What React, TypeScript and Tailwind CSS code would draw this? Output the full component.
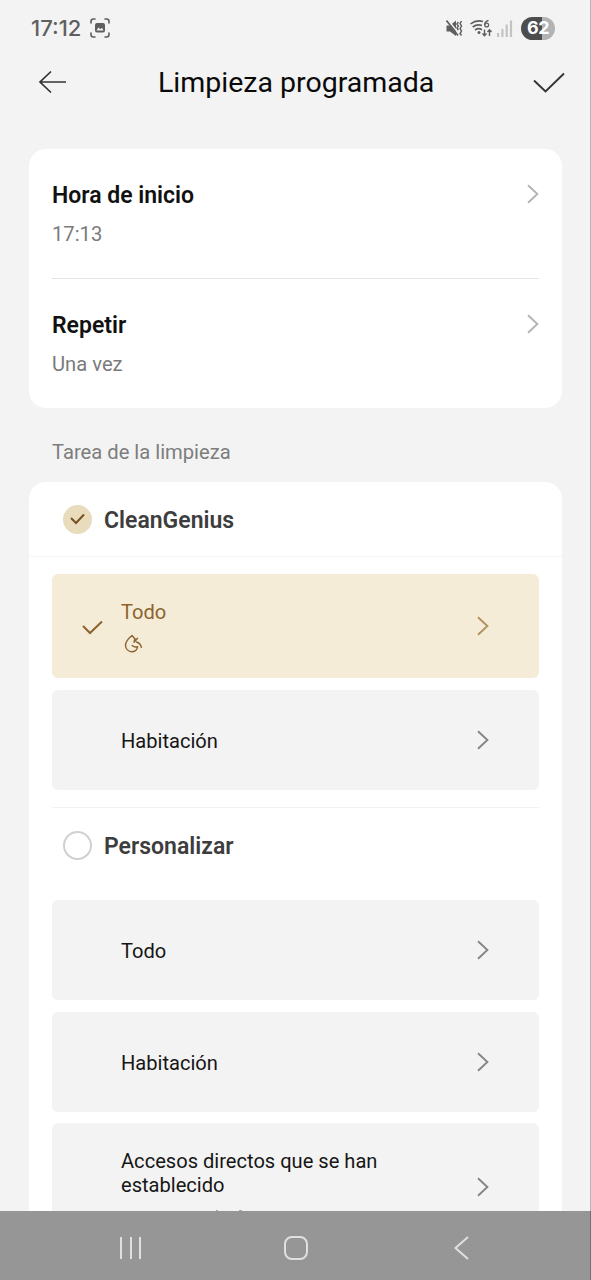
import React from 'react';

interface ChevronProps {
  className: string;
}

const Chevron: React.FC<ChevronProps> = ({ className }) => (
  <svg width="12" height="20" viewBox="0 0 12 20" fill="none" stroke="currentColor" strokeWidth="1.9" className={`shrink-0 ${className}`}>
    <path d="M1 1.200 L10.400 10 L1 18.800" />
  </svg>
);

const StatusBar: React.FC = () => (
  <div className="flex h-14 items-center justify-between pl-[31px] pr-9 text-[#5f5f5f]">
    <div className="flex items-center gap-2">
      <span className="w-[51px] whitespace-nowrap font-['Inter'] text-[22px] font-medium leading-none">17:12</span>
      <svg width="20" height="20" viewBox="0 0 20 20" fill="none" stroke="currentColor" strokeWidth="1.6" strokeLinecap="round">
        <path d="M1 5V3.500Q1 1 3.500 1H5M15 1h1.500Q19 1 19 3.500V5M19 15v1.500Q19 19 16.500 19H15M5 19H3.500Q1 19 1 16.500V15" />
        <rect x="5" y="5" width="10" height="9.500" rx="2" fill="currentColor" stroke="none" />
        <path d="M6.500 12.500 L8.500 9.500 L10.300 11.300 L12 9.800 L13.500 12.500Z" fill="#f3f3f3" stroke="none" />
      </svg>
    </div>
    <div className="flex items-center">
      <svg width="17" height="19" viewBox="0 0 17 19" fill="none" stroke="currentColor">
        <path d="M0.500 6.500H4L10 1.500V17L4 12.500H0.500Z" fill="currentColor" stroke="none" />
        <path d="M1.500 0.500L14 16" stroke="#f3f3f3" strokeWidth="1.500" />
        <path d="M0.500 1.500L12 16.500" strokeWidth="1.700" />
        <path d="M12.300 3L11 5L12.300 7L11 9L12.300 11M15.500 2L14.100 4.500L15.500 7L14.100 9.500L15.500 12L14.100 14.500L15.500 16.500" strokeWidth="1.500" />
      </svg>
      <svg width="23" height="19" viewBox="0 0 23 19" fill="none" stroke="currentColor" strokeWidth="1.600" className="ml-[7px]">
        <path d="M0.500 5Q6 0.500 13 2.500M2.700 8Q7 4.800 12 6.500M5 11Q8.500 8.500 12 10.700" />
        <circle cx="9" cy="13.500" r="1.500" fill="currentColor" stroke="none" />
        <path d="M18.500 1.500Q14.500 2.500 14.700 6" strokeWidth="1.400" />
        <circle cx="16.700" cy="6" r="1.900" strokeWidth="1.300" />
        <path d="M14.500 10.500V16.500M12.500 14.500L14.500 16.700L16.500 14.500M19.500 17V11M17.500 13L19.500 10.800L21.500 13" strokeWidth="1.400" />
      </svg>
      <svg width="16" height="17" viewBox="0 0 16 17" fill="#c3c3c3" className="ml-1">
        <rect x="0" y="13" width="2.200" height="4" />
        <rect x="4.300" y="9" width="2.200" height="8" />
        <rect x="8.600" y="4.500" width="2.200" height="12.500" />
        <rect x="12.900" y="0.500" width="2.200" height="16.500" />
      </svg>
      <div className="ml-2 flex h-[23px] w-[34px] items-center justify-center rounded-full bg-linear-to-r from-[#4d4d4d] from-62% to-[#b3b3b3] to-62%">
        <span className="font-['Inter'] text-[18px] font-bold leading-none tracking-[-0.5px] text-white">62</span>
      </div>
    </div>
  </div>
);

const Header: React.FC = () => (
  <header className="flex h-[53px] items-center pl-[38px] pr-[26px]">
    <svg width="29" height="24" viewBox="0 0 29 24" fill="none" stroke="#333" strokeWidth="1.700" className="mb-[2px] shrink-0">
      <path d="M28 12H2M13 1.500L2 12L13 22.500" />
    </svg>
    <h1 className="flex-1 whitespace-nowrap pl-[91px] pt-[2px] text-[28.500px] leading-none text-[#0a0a0a]">Limpieza programada</h1>
    <svg width="32" height="22" viewBox="0 0 32 22" fill="none" stroke="#333" strokeWidth="1.900" className="shrink-0">
      <path d="M1 8.500L12.500 19.500L31 1.500" />
    </svg>
  </header>
);

interface SettingRowProps {
  title: string;
  value: string;
}

const SettingRow: React.FC<SettingRowProps> = ({ title, value }) => (
  <div className="flex h-[129px] items-start justify-between pt-[34px]">
    <div>
      <div className="text-[23px] font-semibold leading-[26px] text-[#111]">{title}</div>
      <div className="mt-[13px] text-[20.200px] leading-6 text-[#7b7b7b]">{value}</div>
    </div>
    <Chevron className="mt-[0.500px] text-[#b4b4b4]" />
  </div>
);

interface OptionProps {
  label: string;
  selected?: boolean;
}

const Option: React.FC<OptionProps> = ({ label, selected }) => (
  <div className={`flex items-center rounded-md pr-[50px] ${selected ? 'h-[104px] bg-[#f5ecd7] text-[#8b632f]' : 'h-[100px] bg-[#f3f3f3] text-[#161616]'}`}>
    <div className="w-[69px] shrink-0 pl-[30px]">
      {selected && (
        <svg width="21" height="15" viewBox="0 0 21 15" fill="none" stroke="currentColor" strokeWidth="2" className="mt-[2px]">
          <path d="M1 6L8 13L20 1.500" />
        </svg>
      )}
    </div>
    <div className="flex-1 pt-[2px]">
      <div className="text-[20.100px] leading-6">{label}</div>
      {selected && (
        <svg width="20" height="20" viewBox="0 0 20 20" fill="none" stroke="currentColor" strokeWidth="1.400" strokeLinecap="round" strokeLinejoin="round" className="ml-[3px] mt-[10px]">
          <path d="M10.800 4.800L8 1.500C5 4 1.500 7.500 1.500 11.200C1.500 15 4.500 17.700 7.700 17.700C10.800 17.700 13 16 13.600 12.800C11.500 13.300 9.500 12.800 8.200 11.500" />
          <path d="M10.800 4.800L10 8.200L13.500 4.200M12.500 8Q16.400 9 17.400 13.300" />
        </svg>
      )}
    </div>
    <Chevron className={selected ? 'text-[#b1925f]' : 'text-[#858585]'} />
  </div>
);

export default function App() {
  return (
    <div className="relative flex h-[1280px] w-[591px] flex-col overflow-hidden bg-[#f3f3f3] font-['Roboto',sans-serif]">
      <StatusBar />
      <Header />

      <main className="min-h-0 flex-1 overflow-hidden px-[29px] pt-10">
        <section className="w-[533px] rounded-[17px] bg-white px-[23px]">
          <SettingRow title="Hora de inicio" value="17:13" />
          <div className="h-px bg-[#e4e4e4]" />
          <SettingRow title="Repetir" value="Una vez" />
        </section>

        <h2 className="ml-[23px] flex h-[74px] items-center pt-[14px] text-[20.200px] leading-6 text-[#7d7d7d]">Tarea de la limpieza</h2>

        <section className="w-[533px] rounded-t-[17px] bg-white">
          <div className="flex h-[75px] items-center gap-3 border-b border-[#f4f4f4] pl-[34px]">
            <div className="flex size-[29px] items-center justify-center rounded-full bg-[#e8dcbc]">
              <svg width="15" height="12" viewBox="0 0 15 12" fill="none" stroke="#765127" strokeWidth="2">
                <path d="M1 5L6 10L14 1.500" />
              </svg>
            </div>
            <span className="pt-[4px] text-[23px] font-semibold leading-[26px] text-[#3d3d3d]">CleanGenius</span>
          </div>
          <div className="flex flex-col gap-3 px-[23px] pt-[17px]">
            <Option label="Todo" selected />
            <Option label="Habitación" />
          </div>

          <div className="mx-[23px] mt-[17px] h-px bg-[#f1f1f1]" />
          <div className="flex h-[92px] items-center gap-3 pb-[17px] pl-[34px]">
            <div className="size-[29px] rounded-full border-[2.500px] border-[#d0d0d0]" />
            <span className="pt-[3px] text-[23px] font-semibold leading-[26px] text-[#3d3d3d]">Personalizar</span>
          </div>
          <div className="flex flex-col gap-[11.500px] px-[23px]">
            <Option label="Todo" />
            <Option label="Habitación" />
            <div className="relative flex h-[128px] items-center rounded-t-md bg-[#f3f3f3] pl-[69px] pr-[50px]">
              <div className="flex-1 pb-[28px] text-[20.100px] leading-6 text-[#161616]">
                Accesos directos que se han
                <br />
                establecido
              </div>
              <Chevron className="text-[#858585]" />
              {/* tops of the next line, cut off by the navigation bar */}
              <i className="absolute left-[164px] top-[87px] h-px w-[2px] bg-[#a5a5a5]" />
              <i className="absolute left-[187px] top-[87px] h-px w-[3px] bg-[#a5a5a5]" />
            </div>
          </div>
        </section>
      </main>

      <nav className="flex h-[69px] shrink-0 items-center bg-[#969696] pt-[5px] text-[#e0e0e0]">
        <svg width="22" height="22" viewBox="0 0 22 22" fill="currentColor" className="ml-[120px]">
          <rect x="0" y="0" width="2" height="22" />
          <rect x="10" y="0" width="2" height="22" />
          <rect x="19" y="0" width="2" height="22" />
        </svg>
        <div className="ml-[142px] size-6 rounded-[8px] border-2 border-[#e0e0e0]" />
        <svg width="15" height="24" viewBox="0 0 15 24" fill="none" stroke="currentColor" strokeWidth="2" className="ml-[146px]">
          <path d="M14 1L1.500 12L14 23" />
        </svg>
      </nav>

      <div className="absolute inset-y-0 right-0 w-px bg-black/25" />
    </div>
  );
}
